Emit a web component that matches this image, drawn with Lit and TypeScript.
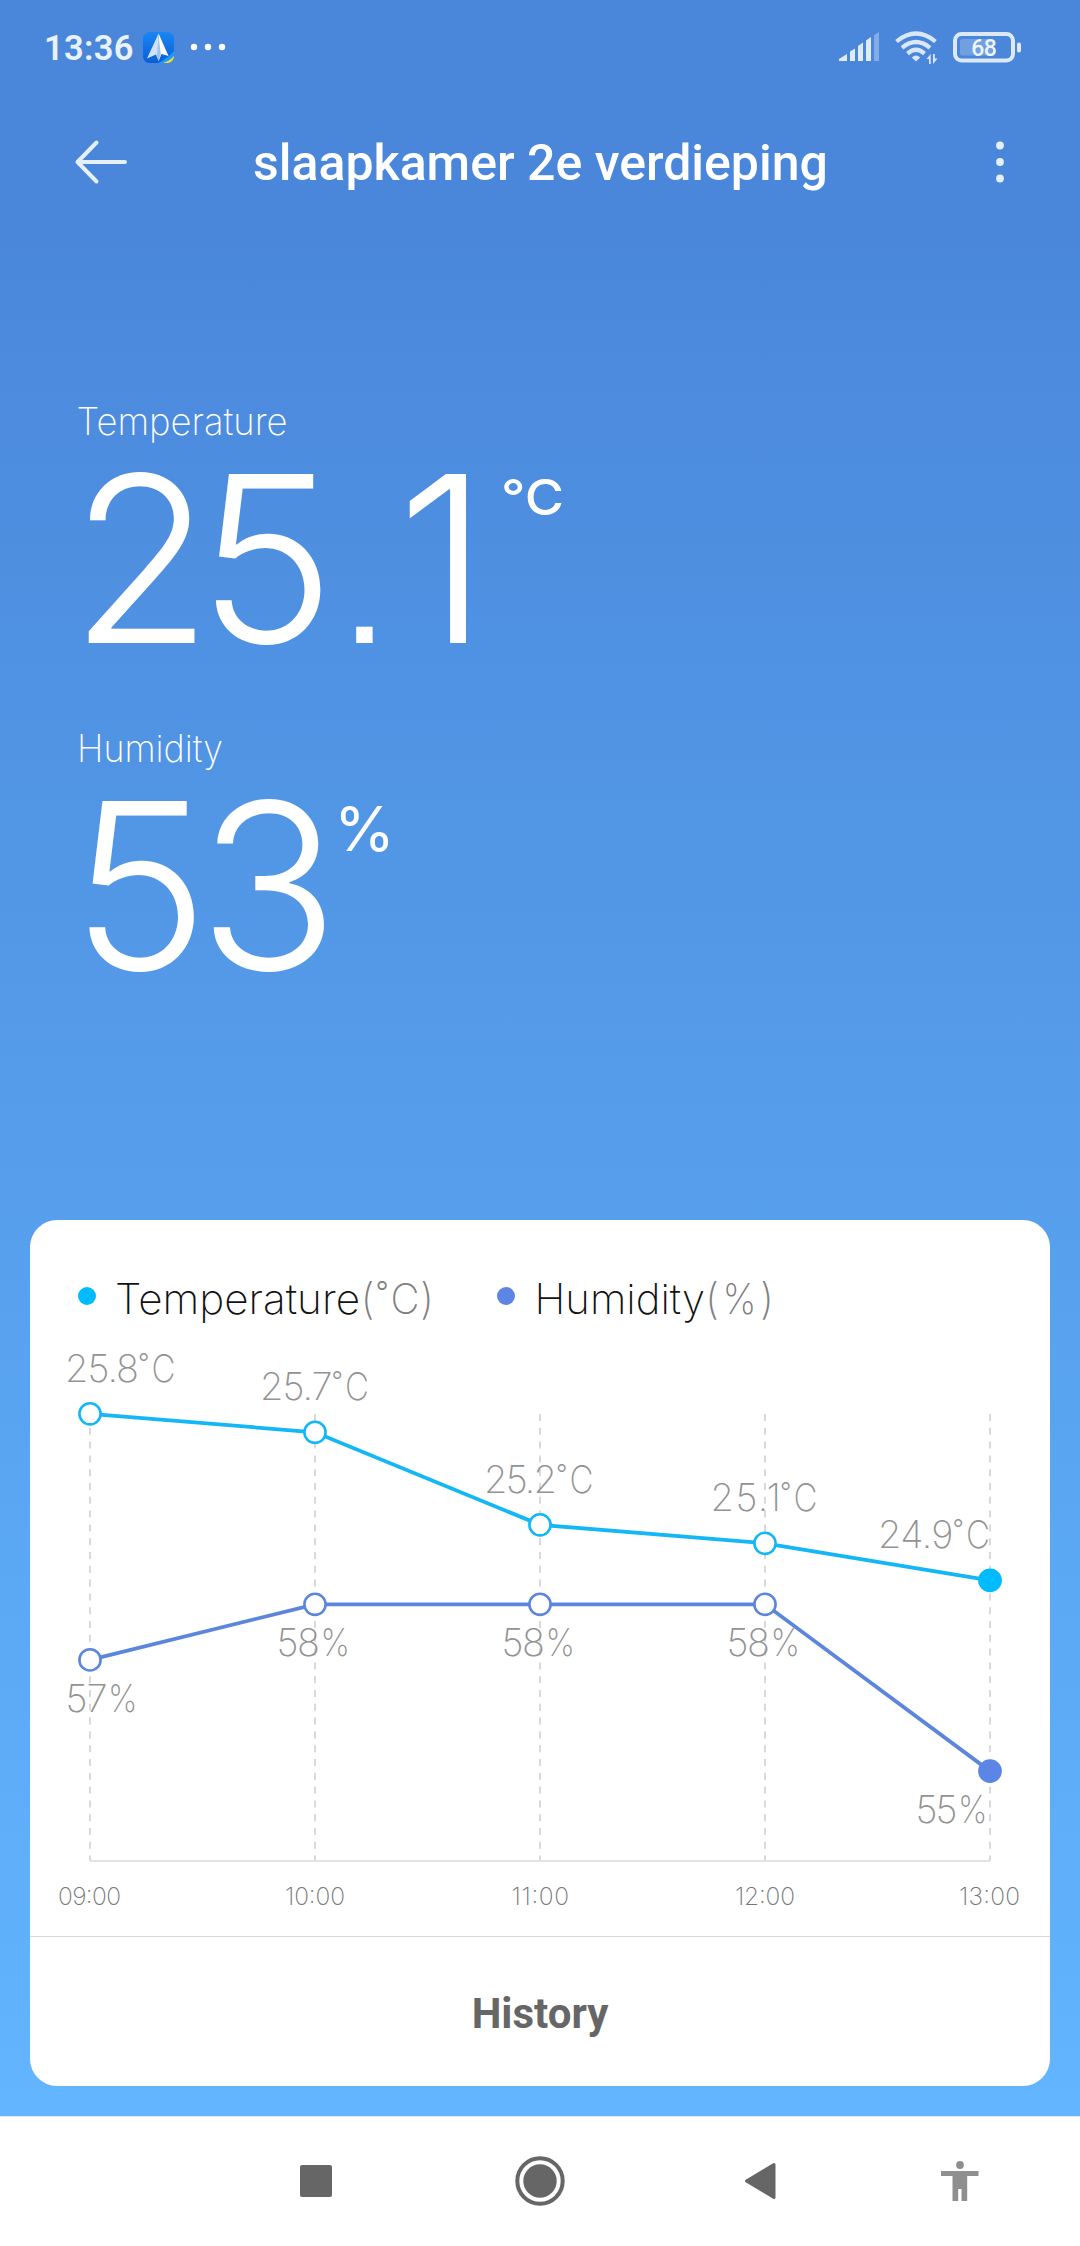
import { LitElement, html, svg, css } from "lit";
import { customElement } from "lit/decorators.js";

interface Sample {
  time: string;
  timeX: number;
  timeW: number;
  temp: number;
  tempX: number;
  tempW: number;
  hum: number;
  humX: number;
  humW: number;
}

const SAMPLES: Sample[] = [
  { time: "09:00", timeX: 28, timeW: 63, temp: 25.8, tempX: 35, tempW: 110, hum: 57, humX: 35.5, humW: 71 },
  { time: "10:00", timeX: 255, timeW: 60, temp: 25.7, tempX: 230, tempW: 108.5, hum: 58, humX: 246.5, humW: 72.5 },
  { time: "11:00", timeX: 481.5, timeW: 57.5, temp: 25.2, tempX: 454, tempW: 109, hum: 58, humX: 471.5, humW: 72.5 },
  { time: "12:00", timeX: 705, timeW: 60, temp: 25.1, tempX: 680.5, tempW: 106.5, hum: 58, humX: 696.5, humW: 72.5 },
  { time: "13:00", timeX: 929, timeW: 61, temp: 24.9, tempX: 848, tempW: 111.5, hum: 55, humX: 885.5, humW: 71 },
];

const pointX = (i: number) => 60 + i * 225;
const tempY = (t: number) => 53.8 + (25.8 - t) * 185;
const humY = (h: number) => 244.3 + (58 - h) * 55.6;

@customElement("app-root")
export class AppRoot extends LitElement {
  static styles = css`
    :host {
      display: flex;
      flex-direction: column;
      width: 1080px;
      height: 2246px;
      font-family: Roboto, "Liberation Sans", sans-serif;
      color: #fff;
    }
    * {
      box-sizing: border-box;
    }
    svg {
      display: block;
      flex: none;
      overflow: visible;
    }
    .screen {
      height: 2116px;
      display: flex;
      flex-direction: column;
      background: linear-gradient(#4a86da 0, #4a87da 220px, #62b5fe 2116px);
    }
    .status {
      height: 94px;
      padding: 0 58px 0 44px;
      display: flex;
      align-items: center;
      color: #eaf2fd;
    }
    .clock {
      font-size: 34.5px;
      font-weight: 600;
      line-height: 40px;
      width: 99px;
      padding-top: 2px;
      letter-spacing: 0.3px;
    }
    .more {
      margin-left: 16px;
    }
    .spacer {
      flex: 1;
    }
    .wifi {
      margin-left: 15px;
    }
    .battery {
      margin-left: 15px;
    }
    .battery text {
      font-size: 23px;
      font-weight: 500;
    }
    .bar {
      height: 136px;
      padding: 0 74px 0 75px;
      display: grid;
      grid-template-columns: 53px 825px 53px;
      align-items: center;
    }
    .title {
      margin: 0;
      padding-top: 2px;
      font-size: 50px;
      font-weight: 500;
      line-height: 60px;
      text-align: center;
    }
    .menu {
      justify-self: end;
    }
    .readings {
      flex: 1;
      padding: 170px 0 0 60px;
      font-family: Inter, "Liberation Sans", sans-serif;
      font-feature-settings: "ss07";
    }
    .label {
      font-size: 37.5px;
      font-weight: 250;
    }
    .value {
      font-size: 232px;
      font-weight: 265;
    }
    .value .point {
      font-size: 180px;
      font-weight: 320;
    }
    .unit {
      font-size: 50px;
      font-weight: 470;
    }
    .unit.percent {
      font-size: 62px;
      font-weight: 400;
    }
    .card {
      height: 866px;
      margin: 0 30px 30px;
      border-radius: 27px;
      background: #fff;
      font-family: Inter, "Liberation Sans", sans-serif;
      font-feature-settings: "ss07";
    }
    .legend {
      height: 140px;
      padding: 48px 0 0 48px;
      display: flex;
    }
    .key text {
      font-size: 42.5px;
      font-weight: 220;
      fill: #111;
    }
    .key .scale {
      fill: #808080;
    }
    .key .degree {
      font-size: 29px;
      font-weight: 300;
    }
    .history {
      height: 150px;
      padding-top: 3px;
      border-top: 1px solid #d8d8d8;
      display: flex;
      align-items: center;
      justify-content: center;
      font-family: Roboto, "Liberation Sans", sans-serif;
      font-size: 42px;
      font-weight: 700;
      color: #666;
    }
    .grid {
      stroke: #d9d9d9;
      stroke-width: 2;
      stroke-dasharray: 7 6.8;
    }
    .axis {
      stroke: #e3e3e3;
      stroke-width: 2;
    }
    .line {
      fill: none;
      stroke-width: 3.8;
    }
    .t {
      stroke: #13b7f5;
    }
    .h {
      stroke: #5c86dc;
    }
    .node {
      fill: #fff;
      stroke-width: 2.6;
    }
    .node.t.last {
      fill: #00bcff;
      stroke: #00bcff;
    }
    .node.h.last {
      fill: #5c86e6;
      stroke: #5c86e6;
    }
    .note {
      font-size: 38px;
      font-weight: 235;
      fill: #939393;
    }
    .note .degree {
      font-size: 25px;
      font-weight: 350;
    }
    .time {
      font-size: 24.5px;
      font-weight: 250;
      fill: #757575;
    }
    .nav {
      height: 130px;
      padding: 0 0 1px 300px;
      background: #fff;
      border-top: 1px solid #dceefe;
      display: flex;
      align-items: center;
    }
    .home {
      margin-left: 183px;
    }
    .back {
      margin-left: 180px;
    }
    .person {
      margin-left: 164px;
    }
  `;

  private renderChart() {
    const last = SAMPLES.length - 1;
    const path = (f: (s: Sample) => number) => SAMPLES.map((s, i) => `${pointX(i)},${f(s)}`).join(" ");
    return html`<svg width="1020" height="576" viewBox="0 0 1020 576">
      ${SAMPLES.map((_, i) => svg`<line class="grid" x1=${pointX(i)} x2=${pointX(i)} y1="54" y2="501"></line>`)}
      <line class="axis" x1="60" x2="960" y1="501" y2="501"></line>
      <polyline class="line t" points=${path((s) => tempY(s.temp))}></polyline>
      <polyline class="line h" points=${path((s) => humY(s.hum))}></polyline>
      ${SAMPLES.map((s, i) => {
        const ty = tempY(s.temp) - 32.2;
        const tr = s.tempX + s.tempW;
        const hy = humY(s.hum) + 51.7;
        return svg`
          <circle class="node t ${i === last ? "last" : ""}" cx=${pointX(i)} cy=${tempY(s.temp)} r="10.6"></circle>
          <circle class="node h ${i === last ? "last" : ""}" cx=${pointX(i)} cy=${humY(s.hum)} r="10.6"></circle>
          <text class="note" x=${s.tempX} y=${ty}><tspan textLength=${s.tempW - 36}>${s.temp}</tspan><tspan class="degree" x=${tr - 37} y=${ty - 10}>°</tspan><tspan x=${tr - 23.5} y=${ty} textLength="24" lengthAdjust="spacingAndGlyphs">C</tspan></text>
          <text class="note" x=${s.humX} y=${hy}><tspan textLength=${s.humW - 29}>${s.hum}</tspan><tspan x=${s.humX + s.humW - 28.5} y=${hy} textLength="29.5" lengthAdjust="spacingAndGlyphs">%</tspan></text>
          <text class="time" x=${s.timeX} y="544.7" textLength=${s.timeW}>${s.time}</text>`;
      })}
    </svg>`;
  }

  render() {
    return html`
      <div class="screen">
        <div class="status">
          <span class="clock">13:36</span>
          <svg width="31" height="31" viewBox="0 0 31 31">
            <defs>
              <linearGradient id="sky" x1="0" y1="0" x2="0" y2="1">
                <stop offset="0" stop-color="#1a86f2"></stop>
                <stop offset="1" stop-color="#0a5ed8"></stop>
              </linearGradient>
              <clipPath id="tile"><rect width="31" height="31" rx="6.5"></rect></clipPath>
            </defs>
            <g clip-path="url(#tile)">
              <rect width="31" height="31" fill="url(#sky)"></rect>
              <path d="M15 31 Q24 27 31 19 V31Z" fill="#1f9bfa"></path>
              <path d="M20 31 Q27 29 31 24 V31Z" fill="#f7de2e"></path>
              <path d="M15.6 1.5 L4 26.5 L13 22.5 L15.6 29Z" fill="#cfe3fb"></path>
              <path d="M15.6 1.5 L25.5 24 L18.5 22 L15.6 29Z" fill="#fff"></path>
              <path d="M15.6 3 L17.8 22.5 L15.6 29 L14 23Z" fill="#9fc4f3"></path>
            </g>
          </svg>
          <svg class="more" width="40" height="8" viewBox="0 0 40 8" fill="#fff">
            <circle cx="4" cy="4" r="3.2"></circle>
            <circle cx="18" cy="4" r="3.2"></circle>
            <circle cx="32" cy="4" r="3.2"></circle>
          </svg>
          <span class="spacer"></span>
          <svg width="41" height="34" viewBox="0 0 41 34" fill="#dfeafb">
            <path d="M0 31 V29 L8 24 V31Z"></path>
            <path d="M11 31 V21.5 L16 18.5 V31Z"></path>
            <path d="M19 31 V16 L24 12.5 V31Z"></path>
            <path d="M27 31 V10.5 L32 7 V31Z"></path>
            <path d="M35 31 V5 L40 2 V31Z" opacity=".38"></path>
          </svg>
          <svg class="wifi" width="43" height="34" viewBox="0 0 43 34" fill="none" stroke="#d9e7fb" stroke-width="4.2">
            <path d="M1.5 11.5 Q21 -4.5 40.5 11.5"></path>
            <path d="M7 17.8 Q21 6.2 35 17.8"></path>
            <path d="M12.5 23.6 Q21 16 29.5 23.6"></path>
            <path d="M21 31.5 L16.8 27.5 Q21 23.5 25.2 27.5Z" fill="#d9e7fb" stroke="none"></path>
            <path d="M35.7 34 V24 L31.5 29 H34 V34Z M38 24 V34 L42.5 28.5 H39.8 V24Z" fill="#d9e7fb" stroke="none"></path>
          </svg>
          <svg class="battery" width="69" height="32" viewBox="0 0 69 32">
            <rect x="2" y="3" width="58" height="26.5" rx="6.5" fill="none" stroke="#dce8fb" stroke-width="4"></rect>
            <rect x="7" y="8" width="32" height="16.5" rx="2.5" fill="#fff" opacity=".22"></rect>
            <rect x="64" y="11.5" width="4" height="10" rx="1.8" fill="#dce8fb"></rect>
            <text x="18.3" y="24.8" textLength="25.5" fill="#eef5fe">68</text>
          </svg>
        </div>
        <div class="bar">
          <svg width="53" height="44" viewBox="0 0 53 44" fill="none" stroke="#e6effc" stroke-width="4" stroke-linecap="round" stroke-linejoin="round">
            <path d="M21.5 2.5 L2.5 22 L21.5 41.5 M2.5 22 H50"></path>
          </svg>
          <h1 class="title">slaapkamer 2e verdieping</h1>
          <svg class="menu" width="12" height="44" viewBox="0 0 12 44" fill="#e6effc">
            <circle cx="6" cy="5.5" r="3.9"></circle>
            <circle cx="6" cy="22" r="3.9"></circle>
            <circle cx="6" cy="38.5" r="3.9"></circle>
          </svg>
        </div>
        <div class="readings">
          <svg width="600" height="327" viewBox="0 0 600 327" fill="#fff">
            <text class="label" x="16.5" y="34.7" textLength="211" lengthAdjust="spacingAndGlyphs">Temperature</text>
            <text class="value" x="11" y="243.3" dx="-1 -15">25<tspan class="point" x="279">.</tspan><tspan x="337">1</tspan></text>
            <text class="unit" x="441" y="115" textLength="63" lengthAdjust="spacingAndGlyphs">°C</text>
          </svg>
          <svg width="600" height="327" viewBox="0 0 600 327" fill="#fff">
            <text class="label" x="17" y="34.7" textLength="146" lengthAdjust="spacingAndGlyphs">Humidity</text>
            <text class="value" x="11" y="243.3" dx="0 -10.5">53</text>
            <text class="unit percent" x="274" y="123.7" textLength="61" lengthAdjust="spacingAndGlyphs">%</text>
          </svg>
        </div>
        <div class="card">
          <div class="legend">
            <svg class="key" width="419" height="60" viewBox="0 0 419 60">
              <circle cx="9" cy="28" r="9" fill="#00bcff"></circle>
              <text x="37" y="45.7"><tspan textLength="245" lengthAdjust="spacingAndGlyphs">Temperature</tspan><tspan class="scale" x="282.5">(</tspan><tspan class="scale degree" x="297.5" y="34">°</tspan><tspan class="scale" x="312.5" y="45.7" textLength="29" lengthAdjust="spacingAndGlyphs">C</tspan><tspan class="scale" x="342">)</tspan></text>
            </svg>
            <svg class="key" width="400" height="60" viewBox="0 0 400 60">
              <circle cx="9" cy="28" r="9" fill="#5c86e6"></circle>
              <text x="37.5" y="45.7"><tspan textLength="170.5" lengthAdjust="spacingAndGlyphs">Humidity</tspan><tspan class="scale" x="208">(</tspan><tspan class="scale" x="225.5" textLength="34" lengthAdjust="spacingAndGlyphs">%</tspan><tspan class="scale" x="263">)</tspan></text>
            </svg>
          </div>
          ${this.renderChart()}
          <div class="history">History</div>
        </div>
      </div>
      <div class="nav">
        <svg width="32" height="32" viewBox="0 0 32 32"><rect width="32" height="32" rx="2" fill="#666"></rect></svg>
        <svg class="home" width="50" height="50" viewBox="0 0 50 50">
          <circle cx="25" cy="25" r="22.7" fill="none" stroke="#666" stroke-width="4"></circle>
          <circle cx="25" cy="25" r="16.7" fill="#666"></circle>
        </svg>
        <svg class="back" width="32" height="38" viewBox="0 0 32 38">
          <path d="M1.5 19 L29 2.5 V35.5Z" fill="#666" stroke="#666" stroke-width="3" stroke-linejoin="round"></path>
        </svg>
        <svg class="person" width="38" height="42" viewBox="0 0 38 42" fill="#8f8f8f">
          <circle cx="19" cy="5" r="3.9"></circle>
          <path d="M0 11 H37.5 V16 H26.2 V41 H20.5 V29 H17.2 V41 H11.5 V16 H0Z"></path>
        </svg>
      </div>
    `;
  }
}
